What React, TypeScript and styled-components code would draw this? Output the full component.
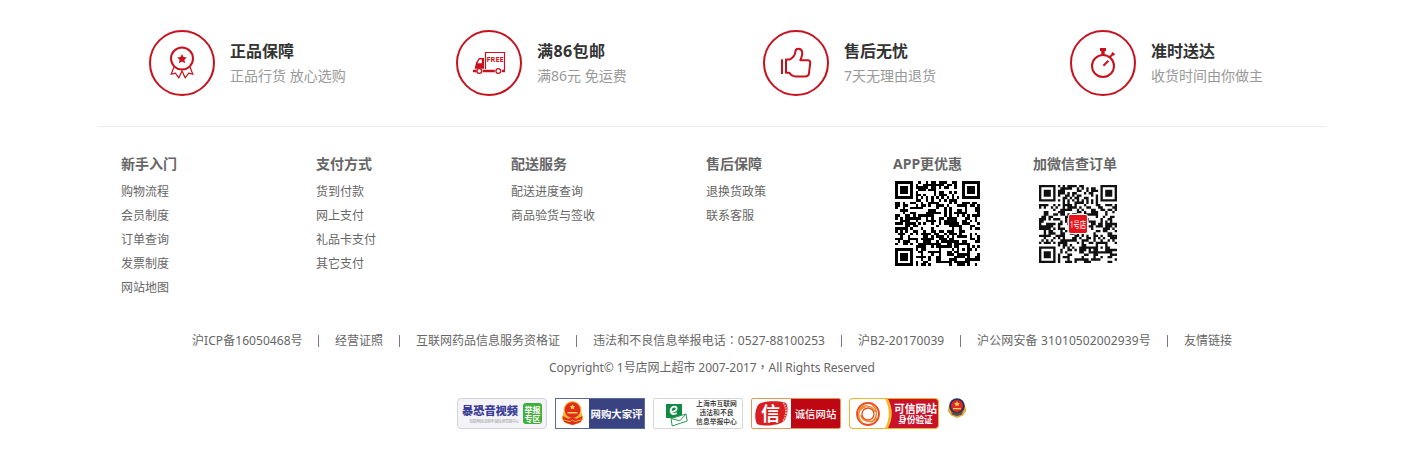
import React from 'react';
import styled, { createGlobalStyle } from 'styled-components';

const RED = '#c7121e';

const Global = createGlobalStyle`
  body {
    margin: 0;
    background: #fff;
    color: #666;
    font: 12px/24px "Noto Sans", "Noto Sans CJK SC", sans-serif;
  }
`;

const Footer = styled.footer`
  width: 1228px;
  margin-left: 98px;
`;

const Features = styled.ul`
  display: grid;
  grid-template-columns: repeat(4, 307px);
  box-sizing: border-box;
  height: 127px;
  margin: 0;
  padding: 30px 0 0;
  list-style: none;
  border-bottom: 1px solid #e9e9e9;
`;

const Feature = styled.li`
  display: flex;
  align-items: flex-start;
  padding-left: 51px;
`;

const FeatureIcon = styled.svg`
  width: 66px;
  height: 66px;
  flex: none;
  fill: none;
  stroke: ${RED};
  stroke-width: 2;
`;

const FeatureText = styled.div`
  padding: 8px 0 0 15px;
  white-space: nowrap;
`;

const FeatureTitle = styled.h3<{ $spacing?: number }>`
  margin: 0;
  color: #333;
  font-size: 16px;
  line-height: 26px;
  font-weight: 700;
  letter-spacing: ${(p) => p.$spacing ?? 0}px;
`;

const FeatureNote = styled.p`
  margin: 0;
  color: #999;
  font-size: 14px;
  line-height: 24px;
`;

const Help = styled.div`
  display: flex;
  height: 202px;
  box-sizing: border-box;
  padding: 25px 0 0 23px;
`;

const Column = styled.section<{ $width: number }>`
  width: ${(p) => p.$width}px;
  flex: none;
`;

const Heading = styled.h4`
  margin: 0;
  font-size: 14px;
  line-height: 24px;
  font-weight: 700;
  white-space: nowrap;
`;

const Links = styled.div`
  display: flex;
  flex-direction: column;
  padding-top: 4px;
`;

const Link = styled.a`
  color: #666;
  text-decoration: none;
  white-space: nowrap;
`;

const Code = styled.svg<{ $size: number; $top: number; $left: number }>`
  display: block;
  width: ${(p) => p.$size}px;
  height: ${(p) => p.$size}px;
  margin: ${(p) => p.$top}px 0 0 ${(p) => p.$left}px;
`;

const Records = styled.nav`
  display: flex;
  justify-content: center;
  height: 24px;
`;

const RecordItem = styled.a<{ $width: number; $spacing: number }>`
  width: ${(p) => p.$width}px;
  letter-spacing: ${(p) => p.$spacing}px;
  white-space: nowrap;
`;

const Divider = styled.i`
  width: 1px;
  height: 12px;
  margin: 6px 16px 0;
  background: #8a7088;
`;

const Mark = styled.span`
  font-family: "Noto Sans CJK TC", sans-serif;
  line-height: 1;
`;

const Copyright = styled.p`
  margin: 3px 0 0;
  text-align: center;
  letter-spacing: -0.06px;
`;

const Badges = styled.div`
  display: flex;
  gap: 8px;
  padding: 18px 0 0 359px;
`;

const Badge = styled.a<{ $border: string; $radius?: number; $bg?: string }>`
  display: flex;
  align-items: center;
  box-sizing: border-box;
  width: 90px;
  height: 31px;
  overflow: hidden;
  border: 1px solid ${(p) => p.$border};
  border-radius: ${(p) => p.$radius ?? 0}px;
  background: ${(p) => p.$bg ?? '#fff'};
`;

const BadgeArt = styled.svg`
  display: block;
  flex: none;
`;

const BadgeText = styled.span<{ $size: number; $line: number; $color: string; $bg?: string; $bold?: boolean }>`
  flex: 1;
  align-self: stretch;
  display: flex;
  flex-direction: column;
  justify-content: center;
  text-align: center;
  white-space: nowrap;
  font-size: ${(p) => p.$size}px;
  line-height: ${(p) => p.$line}px;
  color: ${(p) => p.$color};
  background: ${(p) => p.$bg ?? 'transparent'};
  font-weight: ${(p) => (p.$bold ? 700 : 500)};
`;

const SmallLine = styled.span`
  font-size: 8.6px;
  line-height: 10px;
`;

const VideoBadge = styled(Badge)`
  gap: 4px;
  padding: 0 2px 0 4px;
`;

const VideoTitle = styled.span`
  display: flex;
  flex-direction: column;
  width: 57px;
  flex: none;
  color: #3a3c96;
  font-size: 11.2px;
  line-height: 15px;
  font-weight: 900;
  white-space: nowrap;
`;

const VideoSub = styled.small`
  height: 7px;
  padding-left: 7px;
  overflow: hidden;
  color: #9a9a9a;
  font-size: 4px;
  line-height: 7px;
  font-weight: 400;
  letter-spacing: -0.4px;
`;

const GreenTag = styled.span`
  display: flex;
  align-items: center;
  justify-content: center;
  width: 19px;
  height: 21px;
  flex: none;
  border-radius: 3px;
  background: #3fae3a;
  color: #fff;
  font-size: 8px;
  line-height: 9px;
  font-weight: 700;
  text-align: center;
`;

/* ---- QR code, version 4, error correction level L ---- */

const SIZE = 33;

function multiply(a: number, b: number) {
  let z = 0;
  for (let i = 7; i >= 0; i--) {
    z = (z << 1) ^ ((z >>> 7) * 0x11d);
    z ^= ((b >>> i) & 1) * a;
  }
  return z;
}

function errorWords(data: number[], degree: number) {
  const gen: number[] = Array(degree).fill(0);
  gen[degree - 1] = 1;
  let root = 1;
  for (let i = 0; i < degree; i++) {
    for (let j = 0; j < degree; j++) {
      gen[j] = multiply(gen[j], root);
      if (j + 1 < degree) gen[j] ^= gen[j + 1];
    }
    root = multiply(root, 2);
  }
  const rest: number[] = Array(degree).fill(0);
  data.forEach((b) => {
    const f = b ^ (rest.shift() as number);
    rest.push(0);
    gen.forEach((g, i) => (rest[i] ^= multiply(g, f)));
  });
  return rest;
}

const masks: Record<number, (x: number, y: number) => number> = {
  3: (x, y) => (x + y) % 3,
  7: (x, y) => (((x + y) % 2) + ((x * y) % 3)) % 2,
};

function qrPath(text: string, mask: number) {
  const bits: number[] = [];
  const put = (v: number, n: number) => {
    for (let i = n - 1; i >= 0; i--) bits.push((v >>> i) & 1);
  };
  put(4, 4);
  put(text.length, 8);
  for (const c of text) put(c.charCodeAt(0), 8);
  put(0, 4);
  for (let p = 0xec; bits.length < 640; p ^= 0xec ^ 0x11) put(p, 8);
  const data: number[] = [];
  for (let i = 0; i < bits.length; i += 8) data.push(parseInt(bits.slice(i, i + 8).join(''), 2));
  const words = [...data, ...errorWords(data, 20)];

  const on: boolean[][] = Array.from({ length: SIZE }, () => Array(SIZE).fill(false));
  const fixed: boolean[][] = Array.from({ length: SIZE }, () => Array(SIZE).fill(false));
  const set = (x: number, y: number, v: boolean) => {
    if (x >= 0 && y >= 0 && x < SIZE && y < SIZE) {
      on[y][x] = v;
      fixed[y][x] = true;
    }
  };
  for (let i = 0; i < SIZE; i++) {
    set(6, i, i % 2 === 0);
    set(i, 6, i % 2 === 0);
  }
  for (const [cx, cy] of [[3, 3], [SIZE - 4, 3], [3, SIZE - 4]])
    for (let dy = -4; dy <= 4; dy++)
      for (let dx = -4; dx <= 4; dx++) {
        const d = Math.max(Math.abs(dx), Math.abs(dy));
        set(cx + dx, cy + dy, d !== 2 && d !== 4);
      }
  for (let dy = -2; dy <= 2; dy++)
    for (let dx = -2; dx <= 2; dx++) set(26 + dx, 26 + dy, Math.max(Math.abs(dx), Math.abs(dy)) !== 1);

  const f = (1 << 3) | mask;
  let rem = f;
  for (let i = 0; i < 10; i++) rem = (rem << 1) ^ ((rem >>> 9) * 0x537);
  const format = ((f << 10) | rem) ^ 0x5412;
  const bit = (i: number) => ((format >>> i) & 1) === 1;
  for (let i = 0; i <= 5; i++) set(8, i, bit(i));
  set(8, 7, bit(6));
  set(8, 8, bit(7));
  set(7, 8, bit(8));
  for (let i = 9; i < 15; i++) set(14 - i, 8, bit(i));
  for (let i = 0; i < 8; i++) set(SIZE - 1 - i, 8, bit(i));
  for (let i = 8; i < 15; i++) set(8, SIZE - 15 + i, bit(i));
  set(8, SIZE - 8, true);

  let k = 0;
  for (let right = SIZE - 1; right >= 1; right -= 2) {
    if (right === 6) right = 5;
    for (let v = 0; v < SIZE; v++)
      for (let j = 0; j < 2; j++) {
        const x = right - j;
        const y = ((right + 1) & 2) === 0 ? SIZE - 1 - v : v;
        if (fixed[y][x]) continue;
        on[y][x] = k < 800 && ((words[k >>> 3] >>> (7 - (k & 7))) & 1) === 1;
        k++;
        if (masks[mask](x, y) === 0) on[y][x] = !on[y][x];
      }
  }
  return on.map((r, y) => r.map((v, x) => (v ? `M${x} ${y}h1v1h-1z` : '')).join('')).join('');
}

const appCode = qrPath('http://a.app.qq.com/o/simple.jsp?pkgname=com.thestore.main&g_f=991653', 7);
const wechatCode = qrPath('http://weixin.qq.com/r/FnWvLUDENKBsrSdL9yAN', 3);

/* ---- Feature icons ---- */

const Medal = () => (
  <>
    <circle cx="33" cy="28.6" r="11" />
    <path d="M33 24l1.5 3.1 3.4.4-2.5 2.3.7 3.4-3.1-1.700-3.100 1.700.7-3.400-2.500-2.300 3.400-.4z" fill={RED} stroke="none" />
    <path d="M25 37l-2.8 7.200 4.200-1 3.400 4.600L33 41l3.200 6.800 3.400-4.600 4.200 1L41 37" strokeWidth="1.2" />
  </>
);

const Truck = () => (
  <>
    <path d="M29.500 39V22.500h19V40" strokeWidth="1.2" />
    <path d="M18.600 38.700l1.500-6.300 2.800-4.400H28v10.700z" fill={RED} stroke="none" />
    <path d="M21.400 33.200l2-3.600h2.400v3.600z" fill="#fff" stroke="none" />
    <path d="M17 41h3.600M26.800 41h12M46 41h3" strokeWidth="2.4" />
    <circle cx="23.300" cy="41" r="2.400" strokeWidth="1.3" fill="#fff" />
    <circle cx="42.300" cy="41" r="2.400" strokeWidth="1.3" fill="#fff" />
    <text x="30.600" y="32" textLength="17" lengthAdjust="spacingAndGlyphs" fill={RED} stroke="none" fontSize="7" fontWeight="700" fontFamily="Noto Sans, sans-serif">FREE</text>
  </>
);

const Thumb = () => (
  <>
    <path d="M19 29.300V44" />
    <path d="M23 29.600v13.200h3.400c1.400 2.600 3.200 3.600 6.200 3.600h9.600c2.400 0 3.400-.8 3.700-2.600l1.300-10.700c.2-1.900-.6-2.800-2.200-2.800h-7.700c1.400-3.300 2.200-6 1.900-8.200-.3-2.300-1.800-3.400-3.900-3.400-2 0-2.800 1-2.900 2.800-.2 3.200-2 6-5.800 8.100z" strokeLinejoin="round" />
  </>
);

const Stopwatch = () => (
  <>
    <circle cx="33" cy="36" r="11" />
    <path d="M30 18h6v3h-1.300v3.500h-3.400V21H30z" fill={RED} stroke="none" />
    <path d="M39.800 27l3.800-3.600" />
    <path d="M42 22.600l2.400 2.400M33.400 35.800l5-5" />
  </>
);

const features = [
  { icon: <Medal />, title: '正品保障', note: '正品行货 放心选购' },
  { icon: <Truck />, title: '满86包邮', note: '满86元 免运费', spacing: 0.4 },
  { icon: <Thumb />, title: '售后无忧', note: '7天无理由退货' },
  { icon: <Stopwatch />, title: '准时送达', note: '收货时间由你做主' },
];

const help = [
  { title: '新手入门', width: 195, links: ['购物流程', '会员制度', '订单查询', '发票制度', '网站地图'] },
  { title: '支付方式', width: 195, links: ['货到付款', '网上支付', '礼品卡支付', '其它支付'] },
  { title: '配送服务', width: 195, links: ['配送进度查询', '商品验货与签收'] },
  { title: '售后保障', width: 187, links: ['退换货政策', '联系客服'] },
];

const records = [
  { id: 'icp', text: '沪ICP备16050468号', width: 110, spacing: 0.06 },
  { id: 'license', text: '经营证照', width: 48, spacing: 0 },
  { id: 'drug', text: '互联网药品信息服务资格证', width: 144, spacing: 0 },
  { id: 'phone', text: <>违法和不良信息举报电话<Mark>：</Mark>0527-88100253</>, width: 232, spacing: 0.07 },
  { id: 'b2', text: '沪B2-20170039', width: 86, spacing: 0.07 },
  { id: 'police', text: '沪公网安备 31010502002939号', width: 174, spacing: 0.13 },
  { id: 'friends', text: '友情链接', width: 48, spacing: 0 },
];

export default function App() {
  return (
    <>
      <Global />
      <Footer>
        <Features>
          {features.map((f) => (
            <Feature key={f.title}>
              <FeatureIcon viewBox="0 0 66 66">
                <circle cx="33" cy="33" r="32" />
                {f.icon}
              </FeatureIcon>
              <FeatureText>
                <FeatureTitle $spacing={f.spacing}>{f.title}</FeatureTitle>
                <FeatureNote>{f.note}</FeatureNote>
              </FeatureText>
            </Feature>
          ))}
        </Features>

        <Help>
          {help.map((c) => (
            <Column key={c.title} $width={c.width}>
              <Heading>{c.title}</Heading>
              <Links>
                {c.links.map((l) => (
                  <Link key={l}>{l}</Link>
                ))}
              </Links>
            </Column>
          ))}
          <Column $width={140}>
            <Heading>APP更优惠</Heading>
            <Code $size={85} $top={5} $left={2} viewBox="0 0 33 33" shapeRendering="crispEdges">
              <path d={appCode} />
            </Code>
          </Column>
          <Column $width={140}>
            <Heading>加微信查订单</Heading>
            <Code $size={78} $top={9} $left={6} viewBox="0 0 33 33">
              <path d={wechatCode} fill="#111" />
              <rect x="12.3" y="12.3" width="8.4" height="8.4" rx="1" fill="#fff" />
              <rect x="12.7" y="12.7" width="7.6" height="7.6" rx=".6" fill="#e8141c" />
              <text x="13.1" y="18" textLength="6.800" lengthAdjust="spacingAndGlyphs" fill="#fff" fontSize="4">1号店</text>
            </Code>
          </Column>
        </Help>

        <Records>
          {records.map((r, i) => (
            <React.Fragment key={r.id}>
              {i > 0 && <Divider />}
              <RecordItem $width={r.width} $spacing={r.spacing}>{r.text}</RecordItem>
            </React.Fragment>
          ))}
        </Records>
        <Copyright>Copyright© 1号店网上超市 2007-2017<Mark>，</Mark>All Rights Reserved</Copyright>

        <Badges>
          <VideoBadge $border="#d4d4dc" $radius={4} $bg="#f3f3f8">
            <VideoTitle>
              暴恐音视频
              <VideoSub>互联网违法和不良信息举报中心</VideoSub>
            </VideoTitle>
            <GreenTag>举报<br />专区</GreenTag>
          </VideoBadge>

          <Badge $border="#5a6a9c">
            <BadgeArt width="33" height="29" viewBox="0 0 33 29">
              <path d="M8 12L5.500 20l5 4.500 6 1.500 6-1.500 5-4.500L25 12z" fill="#f2b632" />
              <circle cx="16.500" cy="11" r="9" fill="#f2b632" />
              <circle cx="16.500" cy="11" r="7.800" fill="#e02a1c" />
              <path d="M16.500 5.200l.9 1.800 2 .2-1.500 1.400.4 2-1.800-1-1.800 1 .4-2-1.500-1.400 2-.2zM11.500 13h10v1.600h-10z" fill="#ffd24a" />
              <path d="M6.500 17l6 3 4-2 4 2 6-3-1.500 6-8.500 3L8 23z" fill="#e02a1c" />
              <path d="M8 21l6 1.500 2.500-1.500 2.500 1.500 6-1.500" fill="none" stroke="#f2b632" />
            </BadgeArt>
            <BadgeText $size={10.4} $line={14} $color="#fff" $bg="#3a4382" $bold>网购大家评</BadgeText>
          </Badge>

          <Badge $border="#d8d8d8" $radius={2}>
            <BadgeArt width="37" height="29" viewBox="0 0 37 29">
              <path d="M12 5h16v14H12z" fill="#118a43" />
              <path d="M16 12.500c3 .6 7-.6 6.600-3.400-.4-2.400-5-2-5.800 1.600-.8 3.800 2.400 5.600 6 3.400" fill="none" stroke="#fff" strokeWidth="1.800" />
              <path d="M17 19.500l15-4.500 1.200 7-15 5z" fill="#fff" stroke="#2b9a55" />
              <path d="M17 19.500l8.800 2.300L32 15" fill="none" stroke="#2b9a55" />
            </BadgeArt>
            <BadgeText $size={6.8} $line={8.8} $color="#222">
              <span>上海市互联网</span>
              <span>违法和不良</span>
              <span>信息举报中心</span>
            </BadgeText>
          </Badge>

          <Badge $border="#e0995a" $radius={2}>
            <BadgeArt width="39" height="29" viewBox="0 0 39 29">
              <path d="M7 5c5-3.500 22-3.500 27-1 2.500 4 2 13-2 18-5 5-22 5.500-27 3C2 20 3 9 7 5z" fill="#d81e20" />
              <path d="M31 4c4 3 4 13 0 18" fill="none" stroke="#f4a9a0" strokeDasharray="1.500 1" strokeWidth="2" />
              <text x="9" y="21.500" fontSize="19" fontWeight="700" fill="#fff">信</text>
            </BadgeArt>
            <BadgeText $size={10.4} $line={14} $color="#fff" $bg="#bf0613">诚信网站</BadgeText>
          </Badge>

          <Badge $border="#f0b428" $radius={4} $bg="#c9122a">
            <BadgeArt width="43" height="29" viewBox="0 0 43 29">
              <path d="M0 0h38c5 9 5 20 0 29H0z" fill="#f7b92b" />
              <path d="M0 0h35c5 9 5 20 0 29H0z" fill="#fff" />
              <g fill="none">
                <circle cx="18" cy="15" r="11" stroke="#ea4b26" strokeWidth="1.800" />
                <path d="M9 11c4-6 14-5 16 2M22 6c6 4 6 14-1 17M27 19c-5 6-15 4-16-3M13 24c-6-4-6-14 2-16" stroke="#f08a24" strokeWidth="1.500" />
                <circle cx="18" cy="15" r="6" stroke="#ea4b26" strokeWidth="1.300" />
              </g>
            </BadgeArt>
            <BadgeText $size={10.8} $line={12} $color="#fff" $bold>
              <span>可信网站</span>
              <SmallLine>身份验证</SmallLine>
            </BadgeText>
          </Badge>

          <BadgeArt width="20" height="20" viewBox="0 0 20 20">
            <path d="M2 7L.8 13l3.200 4.500L10 20l6-2.500 3.200-4.500L18 7z" fill="#e0ac3c" />
            <circle cx="10" cy="8" r="7.800" fill="#2a2d62" />
            <circle cx="10" cy="8" r="6" fill="#df2a22" />
            <path d="M10 3.200l.9 1.700 1.900.2-1.400 1.300.4 1.900-1.800-.9-1.800.9.4-1.900-1.400-1.300 1.900-.2zM6 10h8v1.300H6z" fill="#ffd257" />
            <path d="M4 14l3.500 1.200L10 14.300l2.500.9L16 14l-1.500 2.800L10 18l-4.500-1.200z" fill="#5a4a50" />
          </BadgeArt>
        </Badges>
      </Footer>
    </>
  );
}
